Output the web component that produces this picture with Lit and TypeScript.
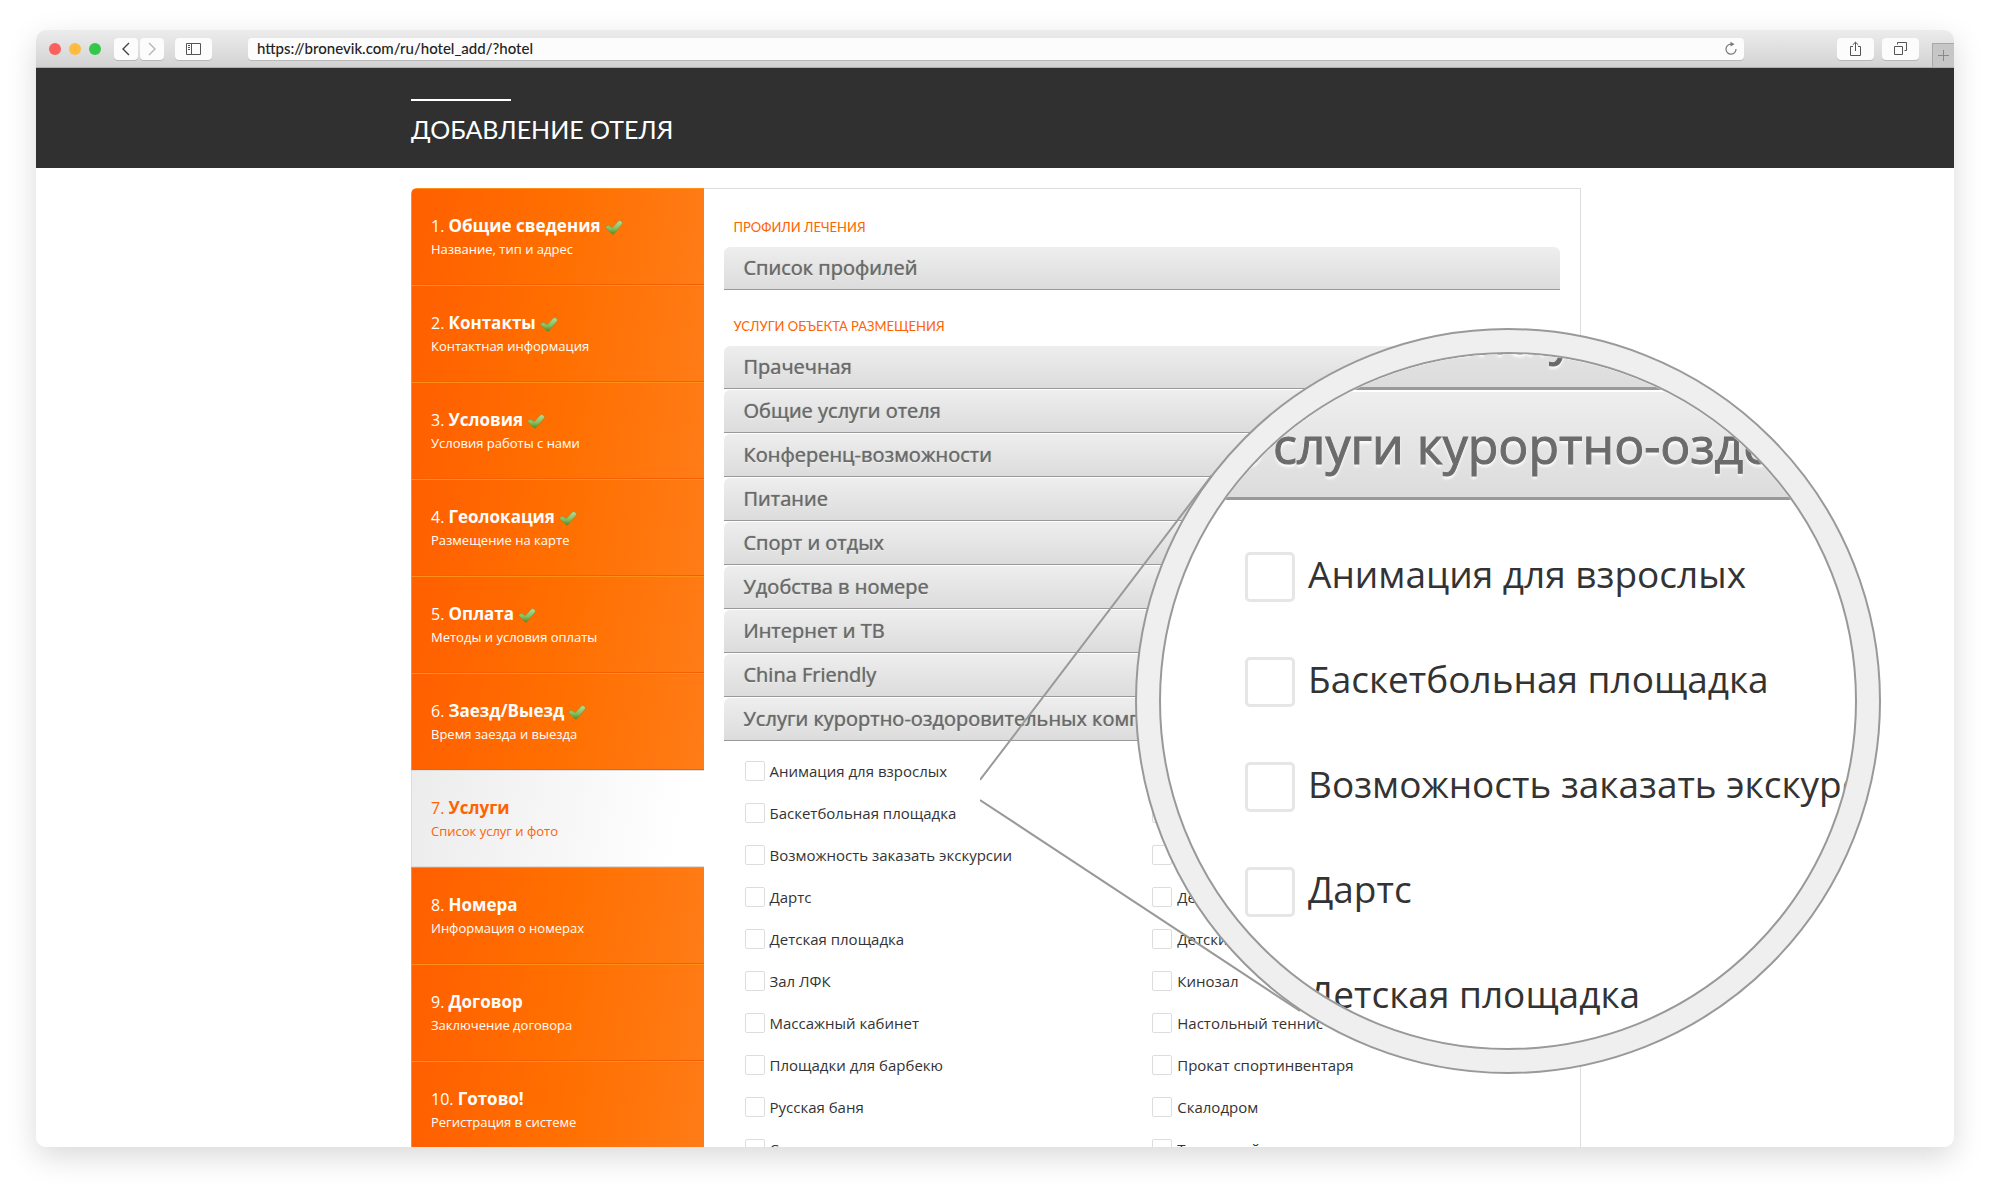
import { LitElement, html, css } from "lit";
import { customElement } from "lit/decorators.js";

const steps = [
  ["Общие сведения", "Название, тип и адрес", true],
  ["Контакты", "Контактная информация", true],
  ["Условия", "Условия работы с нами", true],
  ["Геолокация", "Размещение на карте", true],
  ["Оплата", "Методы и условия оплаты", true],
  ["Заезд/Выезд", "Время заезда и выезда", true],
  ["Услуги", "Список услуг и фото", false],
  ["Номера", "Информация о номерах", false],
  ["Договор", "Заключение договора", false],
  ["Готово!", "Регистрация в системе", false],
] as const;

const groups = [
  "Прачечная",
  "Общие услуги отеля",
  "Конференц-возможности",
  "Питание",
  "Спорт и отдых",
  "Удобства в номере",
  "Интернет и ТВ",
  "China Friendly",
  "Услуги курортно-оздоровительных комплексов",
];

const options = [
  ["Анимация для взрослых", "Баня"],
  ["Баскетбольная площадка", "Бассейн"],
  ["Возможность заказать экскурсии", "Волейбол"],
  ["Дартс", "Детская комната"],
  ["Детская площадка", "Детский клуб"],
  ["Зал ЛФК", "Кинозал"],
  ["Массажный кабинет", "Настольный теннис"],
  ["Площадки для барбекю", "Прокат спортинвентаря"],
  ["Русская баня", "Скалодром"],
  ["Сауна", "Теннисный корт"],
];

const tick = html`<svg class="tick" width="18" height="15" viewBox="0 0 18 15" aria-hidden="true">
  <defs>
    <linearGradient id="g" x1="0" y1="0" x2="0" y2="1">
      <stop offset="0" stop-color="#b9dc9a" />
      <stop offset=".6" stop-color="#86bb5e" />
      <stop offset="1" stop-color="#4c8c20" />
    </linearGradient>
  </defs>
  <path
    d="M.5 7.500 Q1.800 5 3.600 5.300 L7.300 7.600 13.400 1 Q14.400.2 15.400.8 L17.200 2 Q18 2.900 17.300 3.900 L9.200 13.600 Q8 14.900 6.700 13.800Z"
    fill="url(#g)"
    stroke="#7a8a26"
    stroke-width=".5"
    stroke-linejoin="round"
  />
</svg>`;

@customElement("app-root")
export class AppRoot extends LitElement {
  static styles = css`
    :host {
      display: block;
      background: #fff;
      font-family: "Open Sans", "Noto Sans", sans-serif;
      color: #333;
    }
    * {
      box-sizing: border-box;
    }
    .stage {
      height: 100vh;
      padding: 30px 36px 42px;
      overflow: hidden;
      position: relative;
    }
    .window {
      height: 100%;
      display: flex;
      flex-direction: column;
      border-radius: 10px;
      overflow: hidden;
      background: #fff;
    }
    .shadow {
      height: 100%;
      border-radius: 10px;
      box-shadow: 0 10px 30px rgba(0, 0, 0, 0.15);
    }
    .chrome {
      flex: none;
      display: flex;
      align-items: center;
      height: 38px;
      padding-left: 13px;
      background: linear-gradient(#ececec, #d3d3d3);
      border-bottom: 1px solid #a9afac;
    }
    .lights {
      display: flex;
      gap: 8px;
      margin-right: 13px;
    }
    .light {
      width: 12px;
      height: 12px;
      border-radius: 50%;
      background: #fc605c;
    }
    .light.mid {
      background: #fdbc40;
    }
    .light.max {
      background: #34c84a;
    }
    button {
      font: inherit;
      border: 0;
      margin: 0;
      padding: 0;
      cursor: pointer;
    }
    .tool {
      display: flex;
      align-items: center;
      justify-content: center;
      width: 37px;
      height: 22px;
      border-radius: 4px;
      background: #fcfcfc;
      box-shadow: 0 1px 0 #b8b8b8;
    }
    .tool.nav {
      width: 24px;
      margin-right: 2px;
    }
    .panelbtn {
      margin-left: 9px;
    }
    .address {
      flex: 1;
      display: flex;
      align-items: center;
      height: 22px;
      margin: 0 93px 0 36px;
      padding: 0 6px 0 9px;
      border-radius: 4px;
      background: #fcfcfc;
      box-shadow: 0 1px 0 #b8b8b8;
    }
    .url {
      flex: 1;
      border: 0;
      outline: 0;
      padding: 0 0 2px;
      background: none;
      color: #222;
      font: 500 15px "Lato", sans-serif;
    }
    .share {
      margin-right: 8px;
    }
    .newtab {
      align-self: flex-end;
      display: flex;
      align-items: center;
      justify-content: center;
      width: 22px;
      height: 24px;
      margin-left: 13px;
      background: #c6c6c6;
      border: 1px solid #a8a8a8;
      border-width: 1px 0 0 1px;
    }
    .reload {
      background: none;
      display: flex;
    }
    .banner {
      flex: none;
      height: 100px;
      padding-left: 2px;
      background: #303030;
    }
    .container {
      width: 1170px;
      max-width: 100%;
      margin: 0 auto;
    }
    .title {
      margin: 0;
      padding-top: 31px;
      color: #fff;
      font: 400 25px/36px "Lato", sans-serif;
    }
    .title::before {
      content: "";
      display: block;
      width: 100px;
      height: 2px;
      margin-bottom: 10px;
      background: #fff;
    }
    .body {
      flex: 1;
      min-height: 0;
      overflow: hidden;
      padding: 20px 0 0 2px;
    }
    .columns {
      display: grid;
      grid-template-columns: 1fr 3fr;
    }
    .steps {
      list-style: none;
      margin: 0;
      padding: 0;
      border-radius: 6px 0 0 0;
      overflow: hidden;
    }
    .step {
      display: block;
      height: 97px;
      padding: 25px 19px 0;
      text-decoration: none;
      color: #fff;
      background: linear-gradient(100deg, #ff5f00, #ff6f00 50%, #ff7c17);
      border: solid #ff8f17;
      border-width: 1px 0 0 1px;
      box-shadow: inset 0 -1px 0 #f85f00;
      font-size: 13px;
      line-height: 22px;
    }
    .step.current {
      color: #ff6200;
      background: linear-gradient(100deg, #ececec, #fff 90%);
      border-color: #ddd;
      box-shadow: inset 0 -1px 0 #ddd;
    }
    .name {
      display: block;
      font-size: 16px;
      line-height: 24px;
    }
    .name b {
      font-size: 17px;
    }
    .tick {
      vertical-align: -3px;
    }
    .panel {
      border: solid #ddd;
      border-width: 1px 1px 0 0;
      padding: 26px 20px 0;
    }
    .section {
      margin: 0;
      padding: 0 10px;
      color: #ff6200;
      font: 400 13px/24px "Lato", sans-serif;
      text-transform: uppercase;
    }
    .list {
      display: grid;
      gap: 1px;
      margin: 8px 0 24px;
    }
    .bar {
      width: 100%;
      height: 43px;
      padding: 0 20px;
      text-align: left;
      color: #6b6b6b;
      background: linear-gradient(#eee, #dcdcdc);
      border-bottom: 1px solid #999;
      border-radius: 6px 6px 0 0;
      font-size: 20px;
      line-height: 40px;
      text-shadow: 0 0 1px #6b6b6b, 0 1px 1px #fff;
      white-space: nowrap;
      overflow: hidden;
    }
    .options {
      display: grid;
      grid-template-columns: 1fr 1fr;
      row-gap: 22px;
      padding: 0 0 0 21px;
      margin-top: -4px;
    }
    .option {
      display: flex;
      align-items: center;
      gap: 5px;
      height: 20px;
      font-size: 15px;
      white-space: nowrap;
    }
    .box {
      appearance: none;
      flex: none;
      width: 20px;
      height: 20px;
      margin: 0;
      border: 1px solid #ddd;
      border-radius: 2px;
      background: #fff;
    }
    .leads {
      position: absolute;
      left: 980px;
      top: 470px;
    }
    .lens {
      position: absolute;
      left: 1135px;
      top: 328px;
      width: 746px;
      height: 746px;
      padding: 22px;
      border: 2px solid #999;
      border-radius: 50%;
      background: #efefef;
    }
    .glass {
      height: 100%;
      border: 2px solid #999;
      border-radius: 50%;
      overflow: hidden;
      background: #fff;
      display: flex;
      flex-direction: column;
      justify-content: flex-start;
    }
    .glass .bar {
      flex: none;
      height: 108px;
      margin-bottom: 2px;
      padding: 0 0 0 81px;
      border-bottom: 3px solid #999;
      border-radius: 0;
      font-size: 50px;
      line-height: 96px;
      -webkit-text-stroke: 1px #6b6b6b;
      text-shadow: 0 3px 3px #fff;
    }
    .glass .bar:first-child {
      margin-top: -72px;
    }
    .zoomed {
      display: grid;
      gap: 55px;
      padding: 50px 0 0 84px;
    }
    .zoomed .option {
      align-items: flex-start;
      height: 50px;
      gap: 13px;
      font-size: 37px;
      line-height: 43px;
    }
    .zoomed .box {
      width: 50px;
      height: 50px;
      border: 3px solid #e6e6e6;
      border-radius: 5px;
    }
  `;

  private option(label: string) {
    return html`<label class="option"><input class="box" type="checkbox" />${label}</label>`;
  }

  render() {
    return html`
      <div class="stage">
        <div class="shadow">
          <div class="window">
            <div class="chrome">
              <div class="lights">
                <span class="light"></span><span class="light mid"></span><span class="light max"></span>
              </div>
              <button class="tool nav" aria-label="Назад">
                <svg width="10" height="14" viewBox="0 0 10 14" fill="none" stroke="#444" stroke-width="1.4"><path d="M8 1 2 7l6 6" /></svg>
              </button>
              <button class="tool nav" aria-label="Вперёд">
                <svg width="10" height="14" viewBox="0 0 10 14" fill="none" stroke="#b5b5b5" stroke-width="1.4"><path d="M2 1l6 6-6 6" /></svg>
              </button>
              <button class="tool panelbtn" aria-label="Боковая панель">
                <svg width="15" height="12" viewBox="0 0 15 12" fill="none" stroke="#555"><path d="M.5.5h14v11H.5zM5.5.5v11M2 2.500h2M2 4.500h2M2 6.500h2" /></svg>
              </button>
              <div class="address">
                <input class="url" aria-label="Адрес" value="https://bronevik.com/ru/hotel_add/?hotel" />
                <button class="reload" aria-label="Обновить">
                  <svg width="14" height="15" viewBox="0 0 14 15" fill="none" stroke="#777" stroke-width="1.2"><path d="M7 3.2A5 5 0 1 0 12 8" /><path d="M6.5.8 10.5 3.2 6.5 5.6Z" fill="#777" stroke="none" /></svg>
                </button>
              </div>
              <button class="tool share" aria-label="Поделиться">
                <svg width="13" height="16" viewBox="0 0 13 16" fill="none" stroke="#555"><path d="M4 5.5H1.5v9h10v-9H9M6.5 10V1.2M3.8 3.8 6.5 1.2l2.7 2.6" /></svg>
              </button>
              <button class="tool" aria-label="Вкладки">
                <svg width="13" height="13" viewBox="0 0 13 13" fill="none" stroke="#555"><path d="M.5 4.5h8v8h-8zM3.5 2.5v-2h9v8h-2" /></svg>
              </button>
              <button class="newtab" aria-label="Новая вкладка">
                <svg width="11" height="11" viewBox="0 0 11 11" stroke="#888"><path d="M5.500 0v11M0 5.500h11" /></svg>
              </button>
            </div>
            <header class="banner">
              <div class="container"><h1 class="title">ДОБАВЛЕНИЕ ОТЕЛЯ</h1></div>
            </header>
            <div class="body">
              <div class="container columns">
                <ul class="steps">
                  ${steps.map(
                    ([name, note, done], i) => html`<li>
                      <a class="step ${i === 6 ? "current" : ""}" href="#step${i + 1}">
                        <span class="name">${i + 1}. <b>${name}</b> ${done ? tick : ""}</span>${note}
                      </a>
                    </li>`
                  )}
                </ul>
                <main class="panel">
                  <h2 class="section">Профили лечения</h2>
                  <div class="list"><button class="bar">Список профилей</button></div>
                  <h2 class="section">Услуги объекта размещения</h2>
                  <div class="list">${groups.map((g) => html`<button class="bar">${g}</button>`)}</div>
                  <div class="options">${options.flat().map((o) => this.option(o))}</div>
                </main>
              </div>
            </div>
          </div>
        </div>
        <svg class="leads" width="330" height="550" viewBox="0 0 330 550" stroke="#999" stroke-width="2" aria-hidden="true">
          <path d="M0 310 232 5M0 330 320 541" fill="none" />
        </svg>
        <div class="lens">
          <div class="glass">
            <button class="bar">China Friendly</button>
            <button class="bar">Услуги курортно-оздоровительных</button>
            <div class="zoomed">${options.slice(0, 5).map(([o]) => this.option(o))}</div>
          </div>
        </div>
      </div>
    `;
  }
}
